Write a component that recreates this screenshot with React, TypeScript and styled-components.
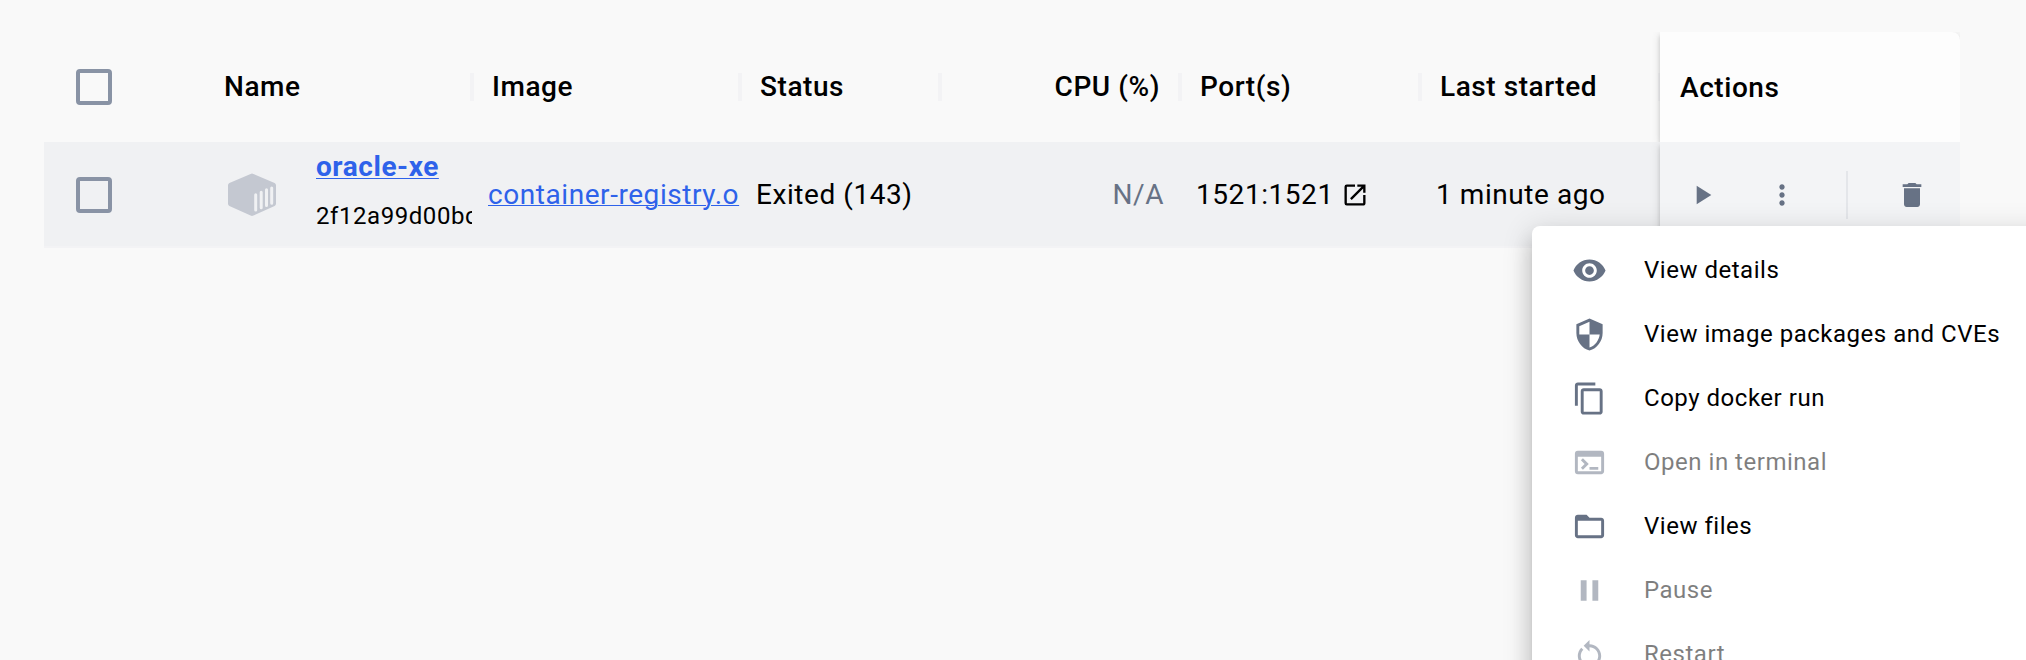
import React from "react";
import styled, { createGlobalStyle } from "styled-components";
import {
  MdContentCopy,
  MdDelete,
  MdFolderOpen,
  MdMoreVert,
  MdOpenInNew,
  MdPause,
  MdPlayArrow,
  MdRestartAlt,
  MdSecurity,
  MdTerminal,
  MdVisibility,
} from "react-icons/md";
import type { IconType } from "react-icons";

const GlobalStyle = createGlobalStyle`
  * { box-sizing: border-box; }
  html, body { margin: 0; padding: 0; }
  body {
    background: #f9f9f9;
    color: #000;
    font-family: Roboto, "Liberation Sans", sans-serif;
    font-size: 28px;
    line-height: 40px;
    overflow: hidden;
  }
`;

const Page = styled.main`
  position: relative;
  width: 2026px;
  height: 660px;
  padding: 32px 66px 0 44px;
  overflow: hidden;
`;

const Grid = styled.div`
  display: flex;
  flex-direction: column;
  width: 1916px;
`;

const HeaderRow = styled.div`
  display: grid;
  grid-template-columns: 176px 252px 268px 200px 240px 240px 240px 300px;
  grid-template-rows: 100%;
  height: 110px;
`;

const DataRow = styled(HeaderRow)`
  height: 106px;
  background: #f0f1f3;
  box-shadow: inset 0 -2px #f3f3f5;
`;

const HeaderCell = styled.div<{ $end?: boolean; $lead?: boolean }>`
  display: flex;
  align-items: center;
  justify-content: ${(p) => (p.$end ? "flex-end" : "flex-start")};
  padding: 0 18px 1px ${(p) => (p.$lead ? 4 : 20)}px;
  margin: 41px -2px 41px 0;
  border-right: 4px solid #f3f3f5;
  font-weight: 500;
  line-height: 28px;
  letter-spacing: 0.56px;
  white-space: nowrap;
`;

const CheckCell = styled.div`
  display: flex;
  align-items: center;
  padding-left: 32px;
`;

const Checkbox = styled.button`
  width: 36px;
  height: 36px;
  padding: 0;
  border: 4px solid #8993a5;
  border-radius: 4px;
  background: transparent;
`;

const Cell = styled.div<{ $end?: boolean }>`
  display: flex;
  align-items: center;
  justify-content: ${(p) => (p.$end ? "flex-end" : "flex-start")};
  min-width: 0;
  padding: 0 16px 1px;
  color: ${(p) => (p.$end ? "#677285" : "#000")};
  letter-spacing: 0.56px;
  white-space: nowrap;
  overflow: hidden;
`;

const NameCell = styled(Cell)`
  padding: 0 0 0 8px;
  gap: 40px;
`;

const NameStack = styled.div`
  display: flex;
  flex-direction: column;
  flex: 1;
  gap: 9px;
  min-width: 0;
  padding-bottom: 8px;
  overflow: hidden;
`;

const Link = styled.a<{ $strong?: boolean }>`
  color: #2e62ea;
  font-weight: ${(p) => (p.$strong ? 700 : 400)};
  line-height: 40px;
  text-decoration: underline;
  text-decoration-thickness: 1px;
  text-underline-offset: ${(p) => (p.$strong ? 2 : 1)}px;
`;

const ContainerId = styled.span`
  font-size: 24px;
`;

const ClipCell = styled(Cell)`
  padding: 0 0 1px 16px;
`;

const Ports = styled.span`
  display: flex;
  align-items: center;
  gap: 7px;
`;

const PinnedCell = styled.div`
  display: flex;
  align-items: center;
  box-shadow: 0 6px 2px -4px rgba(0, 0, 0, 0.2), 0 4px 4px rgba(0, 0, 0, 0.14),
    0 2px 10px rgba(0, 0, 0, 0.12);
  clip-path: inset(0 0 0 -16px);
`;

const ActionsHeader = styled(PinnedCell)`
  padding: 1px 20px 0;
  background: #fdfdfd;
  border-top-right-radius: 8px;
  font-weight: 500;
  letter-spacing: 0.56px;
`;

const ActionsCell = styled(PinnedCell)`
  padding: 0 24px 0 18px;
  background: #f3f4f6;
`;

const IconButton = styled.button<{ $before?: number }>`
  display: flex;
  align-items: center;
  justify-content: center;
  width: 48px;
  height: 48px;
  margin-left: ${(p) => p.$before ?? 0}px;
  padding: 0;
  border: 0;
  background: none;
  color: #677285;
`;

const ActionDivider = styled.span`
  width: 2px;
  height: 48px;
  margin: 0 40px;
  background: #e4e6ea;
`;

const Menu = styled.ul`
  position: absolute;
  top: 226px;
  left: 1532px;
  width: 560px;
  margin: 0;
  padding: 12px 0;
  list-style: none;
  background: #fff;
  border-radius: 8px;
  box-shadow: 0 10px 10px -6px rgba(0, 0, 0, 0.2),
    0 16px 20px 2px rgba(0, 0, 0, 0.14), 0 6px 28px 4px rgba(0, 0, 0, 0.12);
`;

const MenuItem = styled.li<{ $disabled?: boolean }>`
  display: flex;
  align-items: center;
  gap: 37px;
  height: 64px;
  padding-left: 40px;
  font-size: 24px;
  letter-spacing: 0.52px;
  white-space: nowrap;
  opacity: ${(p) => (p.$disabled ? 0.5 : 1)};

  svg {
    flex: none;
    color: #677285;
  }
`;

const ContainerGlyph = () => (
  <svg width="48" height="44" viewBox="0 0 48 44" fill="none">
    <path
      d="M22.6 0.9Q24 0.2 25.4 0.9L46.6 10.1Q48 10.8 48 12.2V30.8Q48 32.2 46.6 32.9L25.4 42.6Q24 43.2 22.6 42.6L1.4 32.9Q0 32.2 0 30.8V12.2Q0 10.8 1.4 10.1Z"
      fill="#c4c8d1"
    />
    <path
      d="M27.7 21.7V37.1M33.2 19.2V34.8M38.5 16.8V32.4M43.7 15V30.2"
      stroke="#f0f1f3"
      strokeWidth="3"
      strokeLinecap="round"
    />
  </svg>
);

type Entry = { label: string; icon: IconType; disabled?: boolean };

const entries: Entry[] = [
  { label: "View details", icon: MdVisibility },
  { label: "View image packages and CVEs", icon: MdSecurity },
  { label: "Copy docker run", icon: MdContentCopy },
  { label: "Open in terminal", icon: MdTerminal, disabled: true },
  { label: "View files", icon: MdFolderOpen },
  { label: "Pause", icon: MdPause, disabled: true },
  { label: "Restart", icon: MdRestartAlt, disabled: true },
];

export default function App() {
  return (
    <Page>
      <GlobalStyle />
      <Grid>
        <HeaderRow>
          <CheckCell>
            <Checkbox aria-label="Select all" />
          </CheckCell>
          <HeaderCell $lead>Name</HeaderCell>
          <HeaderCell>Image</HeaderCell>
          <HeaderCell>Status</HeaderCell>
          <HeaderCell $end>CPU (%)</HeaderCell>
          <HeaderCell>Port(s)</HeaderCell>
          <HeaderCell>Last started</HeaderCell>
          <ActionsHeader>Actions</ActionsHeader>
        </HeaderRow>
        <DataRow>
          <CheckCell>
            <Checkbox aria-label="Select row" />
          </CheckCell>
          <NameCell>
            <ContainerGlyph />
            <NameStack>
              <Link $strong>oracle-xe</Link>
              <ContainerId>2f12a99d00bc</ContainerId>
            </NameStack>
          </NameCell>
          <ClipCell>
            <Link>container-registry.o</Link>
          </ClipCell>
          <Cell>Exited (143)</Cell>
          <Cell $end>N/A</Cell>
          <Cell>
            <Ports>
              1521:1521
              <MdOpenInNew size={28} />
            </Ports>
          </Cell>
          <Cell>1 minute ago</Cell>
          <ActionsCell>
            <IconButton aria-label="Start">
              <MdPlayArrow size={32} />
            </IconButton>
            <IconButton aria-label="More" $before={32}>
              <MdMoreVert size={32} />
            </IconButton>
            <ActionDivider />
            <IconButton aria-label="Delete">
              <MdDelete size={32} />
            </IconButton>
          </ActionsCell>
        </DataRow>
      </Grid>
      <Menu>
        {entries.map(({ label, icon: Icon, disabled }) => (
          <MenuItem key={label} $disabled={disabled}>
            <Icon size={35} />
            {label}
          </MenuItem>
        ))}
      </Menu>
    </Page>
  );
}
